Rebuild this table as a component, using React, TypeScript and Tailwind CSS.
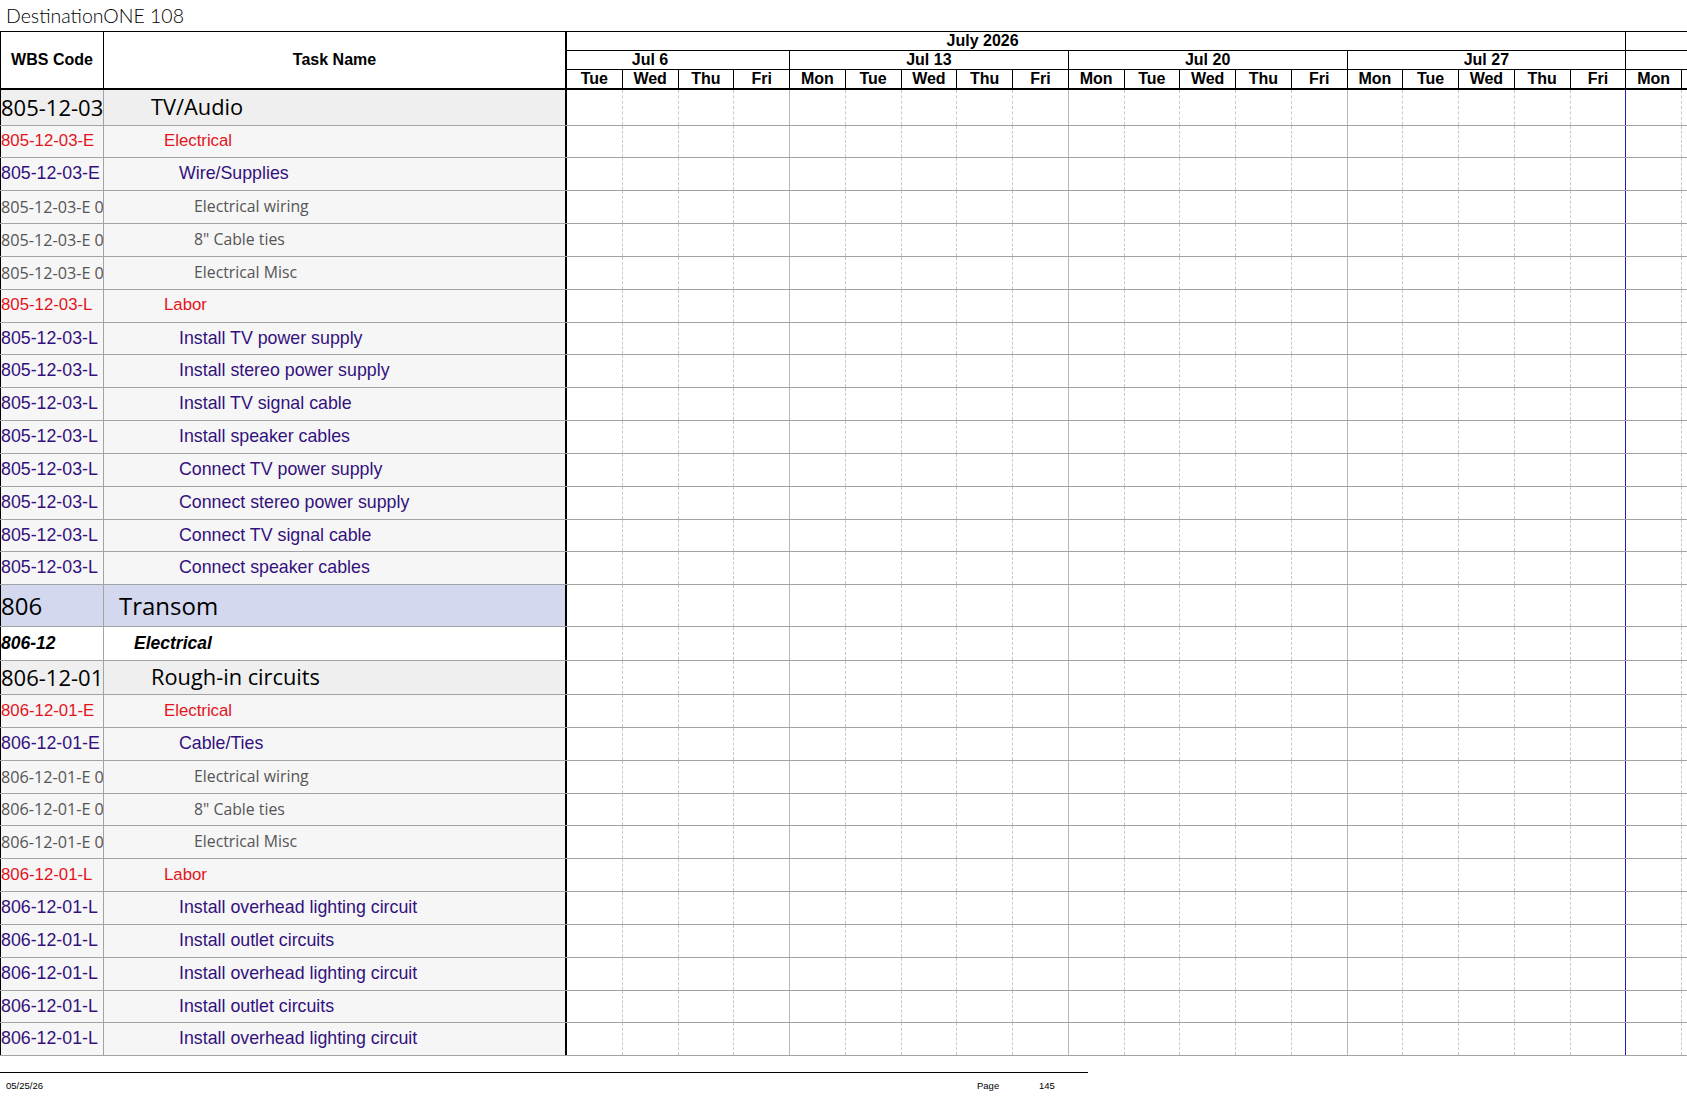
import React from "react";

type Kind = "sum" | "red" | "purple" | "gray" | "top" | "sub";

interface Row {
  wbs: string;
  name: string;
  kind: Kind;
  h?: string;
}

const rows: Row[] = [
  { wbs: "805-12-03", name: "TV/Audio", kind: "sum", h: "h-[35.5px]" },
  { wbs: "805-12-03-E", name: "Electrical", kind: "red" },
  { wbs: "805-12-03-E", name: "Wire/Supplies", kind: "purple" },
  { wbs: "805-12-03-E 0", name: "Electrical wiring", kind: "gray" },
  { wbs: "805-12-03-E 0", name: '8" Cable ties', kind: "gray" },
  { wbs: "805-12-03-E 0", name: "Electrical Misc", kind: "gray" },
  { wbs: "805-12-03-L", name: "Labor", kind: "red" },
  { wbs: "805-12-03-L", name: "Install TV power supply", kind: "purple" },
  { wbs: "805-12-03-L", name: "Install stereo power supply", kind: "purple" },
  { wbs: "805-12-03-L", name: "Install TV signal cable", kind: "purple" },
  { wbs: "805-12-03-L", name: "Install speaker cables", kind: "purple" },
  { wbs: "805-12-03-L", name: "Connect TV power supply", kind: "purple" },
  { wbs: "805-12-03-L", name: "Connect stereo power supply", kind: "purple" },
  { wbs: "805-12-03-L", name: "Connect TV signal cable", kind: "purple" },
  { wbs: "805-12-03-L", name: "Connect speaker cables", kind: "purple" },
  { wbs: "806", name: "Transom", kind: "top", h: "h-[42px]" },
  { wbs: "806-12", name: "Electrical", kind: "sub", h: "h-[33.3px]" },
  { wbs: "806-12-01", name: "Rough-in circuits", kind: "sum", h: "h-[34.4px]" },
  { wbs: "806-12-01-E", name: "Electrical", kind: "red" },
  { wbs: "806-12-01-E", name: "Cable/Ties", kind: "purple" },
  { wbs: "806-12-01-E 0", name: "Electrical wiring", kind: "gray" },
  { wbs: "806-12-01-E 0", name: '8" Cable ties', kind: "gray" },
  { wbs: "806-12-01-E 0", name: "Electrical Misc", kind: "gray" },
  { wbs: "806-12-01-L", name: "Labor", kind: "red" },
  { wbs: "806-12-01-L", name: "Install overhead lighting circuit", kind: "purple" },
  { wbs: "806-12-01-L", name: "Install outlet circuits", kind: "purple" },
  { wbs: "806-12-01-L", name: "Install overhead lighting circuit", kind: "purple" },
  { wbs: "806-12-01-L", name: "Install outlet circuits", kind: "purple" },
  { wbs: "806-12-01-L", name: "Install overhead lighting circuit", kind: "purple" },
];

const styles: Record<Kind, { bg: string; wbs: string; name: string }> = {
  sum: {
    bg: "bg-[#efefef]",
    wbs: "font-['Open_Sans',sans-serif] text-[22px] text-black",
    name: "font-['Open_Sans',sans-serif] text-[21.8px] text-black pl-[47px]",
  },
  red: {
    bg: "bg-[#f6f6f6]",
    wbs: "font-['Liberation_Sans',Arial,sans-serif] text-[16.8px] text-[#e3141c]",
    name: "font-['Liberation_Sans',Arial,sans-serif] text-[16.8px] text-[#e3141c] pl-[60px]",
  },
  purple: {
    bg: "bg-[#f6f6f6]",
    wbs: "font-['Liberation_Sans',Arial,sans-serif] text-[17.8px] text-[#33117d]",
    name: "font-['Liberation_Sans',Arial,sans-serif] text-[17.8px] text-[#33117d] pl-[75px]",
  },
  gray: {
    bg: "bg-[#f6f6f6]",
    wbs: "font-['Open_Sans',sans-serif] text-[16.2px] text-[#555555]",
    name: "font-['Open_Sans',sans-serif] text-[15.8px] text-[#555555] pl-[90px]",
  },
  top: {
    bg: "bg-[#d3d8ef]",
    wbs: "font-['Open_Sans',sans-serif] text-[24px] text-black",
    name: "font-['Open_Sans',sans-serif] text-[24px] text-black pl-[15px]",
  },
  sub: {
    bg: "bg-white",
    wbs: "font-['Liberation_Sans',Arial,sans-serif] text-[17.5px] font-bold italic text-black",
    name: "font-['Liberation_Sans',Arial,sans-serif] text-[17.5px] font-bold italic text-black pl-[30px]",
  },
};

const days = ["Tue", "Wed", "Thu", "Fri", "Mon", "Tue", "Wed", "Thu", "Fri", "Mon", "Tue", "Wed", "Thu", "Fri", "Mon", "Tue", "Wed", "Thu", "Fri", "Mon"];

const hdrFont = "font-['Liberation_Sans',Arial,sans-serif] font-bold text-[16px] text-black leading-none";

function dayLine(i: number) {
  if (i === 18) return "border-r border-[#1f1fb0]";
  if (i === 3 || i === 8 || i === 13) return "border-r border-[#b8b8b8]";
  return "border-r border-dashed border-[#c8c8c8]";
}

function GanttCells() {
  return (
    <div className="flex flex-1 h-full">
      {days.map((_, i) => (
        <div key={i} className={`w-[55.75px] shrink-0 h-full ${dayLine(i)}`} />
      ))}
      <div className="flex-1" />
    </div>
  );
}

function Header() {
  return (
    <div className="flex h-[59px] border-t border-black border-b-2">
      <div className="w-[104px] shrink-0 border-l border-r border-black flex items-center justify-center">
        <span className={hdrFont}>WBS Code</span>
      </div>
      <div className="w-[463px] shrink-0 border-r-2 border-black flex items-center justify-center">
        <span className={hdrFont}>Task Name</span>
      </div>
      <div className="flex-1 flex flex-col">
        <div className="flex h-[19px] border-b border-black">
          <div className="w-[1059.25px] shrink-0 border-r border-black flex items-center justify-center pr-[227px]">
            <span className={hdrFont}>July 2026</span>
          </div>
          <div className="flex-1" />
        </div>
        <div className="flex h-[19px] border-b border-black">
          <div className="w-[223px] shrink-0 border-r border-black flex items-center justify-center pr-[56px]">
            <span className={hdrFont}>Jul 6</span>
          </div>
          <div className="w-[278.75px] shrink-0 border-r border-black flex items-center justify-center">
            <span className={hdrFont}>Jul 13</span>
          </div>
          <div className="w-[278.75px] shrink-0 border-r border-black flex items-center justify-center">
            <span className={hdrFont}>Jul 20</span>
          </div>
          <div className="w-[278.75px] shrink-0 border-r border-black flex items-center justify-center">
            <span className={hdrFont}>Jul 27</span>
          </div>
          <div className="flex-1" />
        </div>
        <div className="flex flex-1">
          {days.map((d, i) => (
            <div key={i} className="w-[55.75px] shrink-0 border-r border-black flex items-center justify-center">
              <span className={hdrFont}>{d}</span>
            </div>
          ))}
          <div className="flex-1" />
        </div>
      </div>
    </div>
  );
}

function BodyRow({ row }: { row: Row }) {
  const s = styles[row.kind];
  return (
    <div className={`flex ${row.h ?? "h-[32.85px]"} border-b border-[#a3a3a3]`}>
      <div className={`w-[104px] shrink-0 ${s.bg} border-l border-black border-r-[#a3a3a3] border-r flex items-center overflow-hidden whitespace-nowrap`}>
        <span className={`${s.wbs} leading-none`}>{row.wbs}</span>
      </div>
      <div className={`w-[463px] shrink-0 ${s.bg} border-r-2 border-black flex items-center overflow-hidden whitespace-nowrap`}>
        <span className={`${s.name} leading-none`}>{row.name}</span>
      </div>
      <GanttCells />
    </div>
  );
}

export default function App() {
  return (
    <div className="w-[1687px] h-[1097px] bg-white overflow-hidden">
      <div className="h-[31px] flex items-center pl-[6px]">
        <span className="font-['Lato',sans-serif] font-light text-[19.5px] text-black leading-none">DestinationONE 108</span>
      </div>
      <Header />
      <div>
        {rows.map((r, i) => (
          <BodyRow key={i} row={r} />
        ))}
      </div>
      <div className="mt-[16px] w-[1088px] border-t border-black h-[26px] flex items-center font-['Liberation_Sans',Arial,sans-serif] text-[9.5px] text-black">
        <span className="pl-[6px] w-[977px]">05/25/26</span>
        <span className="w-[62px]">Page</span>
        <span>145</span>
      </div>
    </div>
  );
}
